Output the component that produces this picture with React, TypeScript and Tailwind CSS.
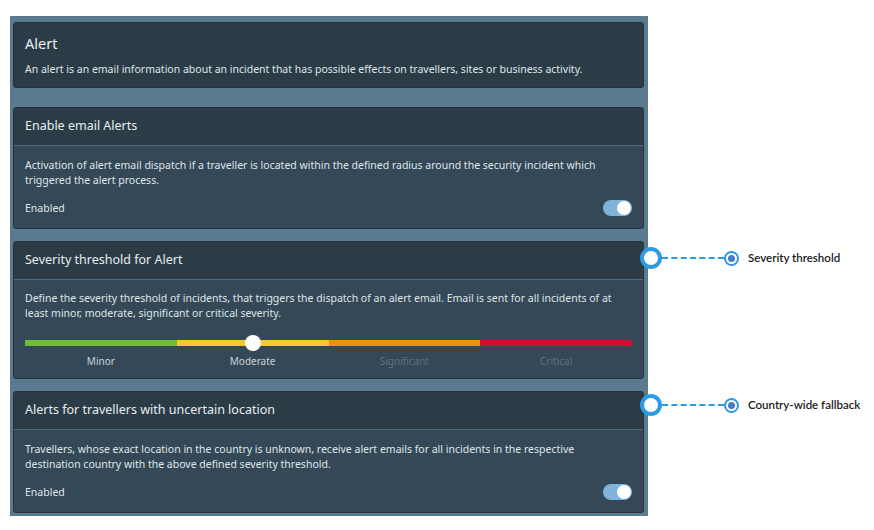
import React from "react";

const font = { fontFamily: '"Noto Sans", "Open Sans", sans-serif' };

function Toggle() {
  return (
    <div className="w-[29px] h-[16px] rounded-full bg-[#7fb3da] relative">
      <div className="absolute right-[1px] top-[1px] w-[14px] h-[14px] rounded-full bg-white" />
    </div>
  );
}

function Card({ title, children, className = "" }: { title: string; children: React.ReactNode; className?: string }) {
  return (
    <div className={`rounded-[3px] border border-[#25333d] bg-[#354857] overflow-hidden ${className}`}>
      <div className="h-[38px] bg-[#2c3c47] flex items-center px-[11px] text-[12.5px] text-[#e6ecef] border-b border-[#4f6b80]">
        {title}
      </div>
      <div className="px-[11px]">{children}</div>
    </div>
  );
}

function Annotation({ top, label }: { top: number; label: string }) {
  return (
    <div className="absolute left-[640px] flex items-center" style={{ top: top - 11 }}>
      <div className="w-[22px] h-[22px] rounded-full border-[4px] border-[#2d9be3] bg-white" />
      <div className="w-[62px] border-t-2 border-dashed border-[#2d9be3]" />
      <div className="w-[15px] h-[15px] rounded-full border-2 border-[#2d9be3] bg-white flex items-center justify-center">
        <div className="w-[7px] h-[7px] rounded-full bg-[#4779cc]" />
      </div>
      <span className="ml-[9px] text-[11.5px] font-semibold text-[#1a1a1a]" style={{ fontFamily: '"Lato", "Open Sans", sans-serif' }}>
        {label}
      </span>
    </div>
  );
}

export default function App() {
  return (
    <div className="relative w-[874px] h-[530px] bg-white" style={font}>
      <div className="absolute left-[10px] top-[16px] w-[638px] h-[500px] bg-[#5a7a90] pl-[3px] pr-[4px] pt-[6px] flex flex-col">
        <div className="h-[66px] rounded-[3px] border border-[#25333d] bg-[#2c3c47] px-[11px] pt-[10px]">
          <div className="text-[14.5px] text-[#eef2f4] leading-[20px]">Alert</div>
          <div className="mt-[9px] text-[10.5px] text-[#dfe6ea] leading-[15px]">
            An alert is an email information about an incident that has possible effects on travellers, sites or business activity.
          </div>
        </div>

        <Card title="Enable email Alerts" className="mt-[19px] h-[122px]">
          <div className="pt-[12px] text-[10.5px] leading-[15px] text-[#dfe6ea]">
            Activation of alert email dispatch if a traveller is located within the defined radius around the security incident which triggered the alert process.
          </div>
          <div className="mt-[6px] flex items-center justify-between">
            <span className="text-[10.5px] text-[#dfe6ea] leading-[15px] mt-[6px]">Enabled</span>
            <div className="mt-[6px]"><Toggle /></div>
          </div>
        </Card>

        <Card title="Severity threshold for Alert" className="mt-[12px] h-[138px]">
          <div className="pt-[11px] text-[10.5px] leading-[15px] text-[#dfe6ea]">
            Define the severity threshold of incidents, that triggers the dispatch of an alert email. Email is sent for all incidents of at least minor, moderate, significant or critical severity.
          </div>
          <div className="relative mt-[19px] h-[6px] flex">
            <div className="flex-1 bg-[#6ebe3c]" />
            <div className="flex-1 bg-[#f4c82f]" />
            <div className="flex-1 bg-[#f28c12]" />
            <div className="flex-1 bg-[#cf0f2f]" />
            <div className="absolute left-[37.5%] top-[-5px] -ml-[8px] w-[16px] h-[16px] rounded-full bg-white" />
          </div>
          <div className="mt-[8px] flex text-[10px] leading-[14px]">
            <div className="flex-1 text-center text-[#c9d3da]">Minor</div>
            <div className="flex-1 text-center text-[#c9d3da]">Moderate</div>
            <div className="flex-1 text-center text-[#5e7282]">Significant</div>
            <div className="flex-1 text-center text-[#5e7282]">Critical</div>
          </div>
        </Card>

        <Card title="Alerts for travellers with uncertain location" className="mt-[12px] h-[122px]">
          <div className="pt-[12px] text-[10.5px] leading-[15px] text-[#dfe6ea]">
            Travellers, whose exact location in the country is unknown, receive alert emails for all incidents in the respective destination country with the above defined severity threshold.
          </div>
          <div className="mt-[6px] flex items-center justify-between">
            <span className="text-[10.5px] text-[#dfe6ea] leading-[15px] mt-[6px]">Enabled</span>
            <div className="mt-[6px]"><Toggle /></div>
          </div>
        </Card>
      </div>

      <Annotation top={258} label="Severity threshold" />
      <Annotation top={405} label="Country-wide fallback" />
    </div>
  );
}
